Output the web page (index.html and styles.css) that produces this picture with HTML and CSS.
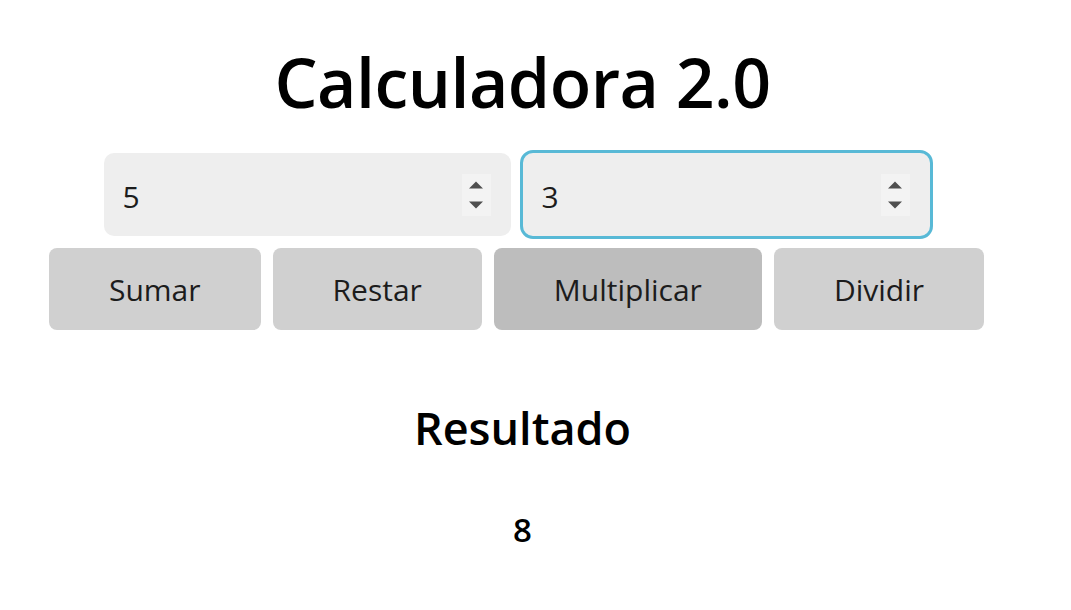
FILE: index.html
```html
<!DOCTYPE html>
<html lang="es">
<head>
<meta charset="utf-8">
<title>Calculadora 2.0</title>
<link rel="stylesheet" href="styles.css">
</head>
<body>
<main class="app">
  <h1 class="title">Calculadora 2.0</h1>
  <div class="inputs">
    <div class="field">
      <input class="num" type="number" value="5">
      <span class="spin"><svg width="16" height="28" viewBox="0 0 16 28"><path d="M1 7.5 L8 0.5 L15 7.5 Z M1 20.5 L15 20.5 L8 27.5 Z" fill="#4f4f4f"/></svg></span>
    </div>
    <div class="field">
      <input class="num is-focused" type="number" value="3">
      <span class="spin"><svg width="16" height="28" viewBox="0 0 16 28"><path d="M1 7.5 L8 0.5 L15 7.5 Z M1 20.5 L15 20.5 L8 27.5 Z" fill="#4f4f4f"/></svg></span>
    </div>
  </div>
  <div class="ops">
    <button class="op">Sumar</button>
    <button class="op">Restar</button>
    <button class="op is-hover">Multiplicar</button>
    <button class="op">Dividir</button>
  </div>
  <h2 class="result-title">Resultado</h2>
  <p class="result">8</p>
</main>
</body>
</html>
```

FILE: styles.css
```css
html, body {
  margin: 0;
  padding: 0;
  background: #ffffff;
}

body {
  font-family: "Open Sans", "Noto Sans", sans-serif;
  color: #000;
}

.app {
  width: 1045px;
  text-align: center;
}

.title {
  margin: 0;
  padding-top: 42px;
  font-size: 68px;
  font-weight: 600;
  line-height: 80px;
  letter-spacing: -0.5px;
}

.inputs {
  display: flex;
  justify-content: center;
  margin-top: 31px;
}

.field {
  position: relative;
  width: 407px;
  height: 83px;
  margin-right: 12px;
}

.num {
  box-sizing: border-box;
  width: 100%;
  height: 100%;
  border: none;
  border-radius: 10px;
  background: #eeeeee;
  padding: 3px 0 0 19px;
  font-family: "Open Sans", "Noto Sans", sans-serif;
  font-size: 30px;
  color: #1c1c1c;
  outline: none;
  -moz-appearance: textfield;
}

.num::-webkit-inner-spin-button,
.num::-webkit-outer-spin-button {
  -webkit-appearance: none;
  margin: 0;
}

.num.is-focused {
  outline: 3px solid #58b9d6;
  outline-offset: 0;
}

.spin {
  position: absolute;
  top: 21px;
  right: 20px;
  width: 29px;
  height: 42px;
  background: #f3f3f3;
  display: flex;
  align-items: center;
  justify-content: center;
  pointer-events: none;
}

.spin svg {
  display: block;
}

.ops {
  display: flex;
  justify-content: center;
  margin-top: 12px;
}

.op {
  height: 82px;
  margin-right: 12px;
  padding: 0 60px;
  border: none;
  border-radius: 8px;
  background: #d0d0d0;
  font-family: "Open Sans", "Noto Sans", sans-serif;
  font-size: 30px;
  color: #1c1c1c;
}

.op.is-hover {
  background: #bdbdbd;
}

.result-title {
  margin: 69px 0 0;
  font-size: 45px;
  font-weight: 600;
  line-height: 58px;
}

.result {
  margin: 52px 0 0;
  font-size: 33px;
  font-weight: 600;
  line-height: 42px;
}
```
